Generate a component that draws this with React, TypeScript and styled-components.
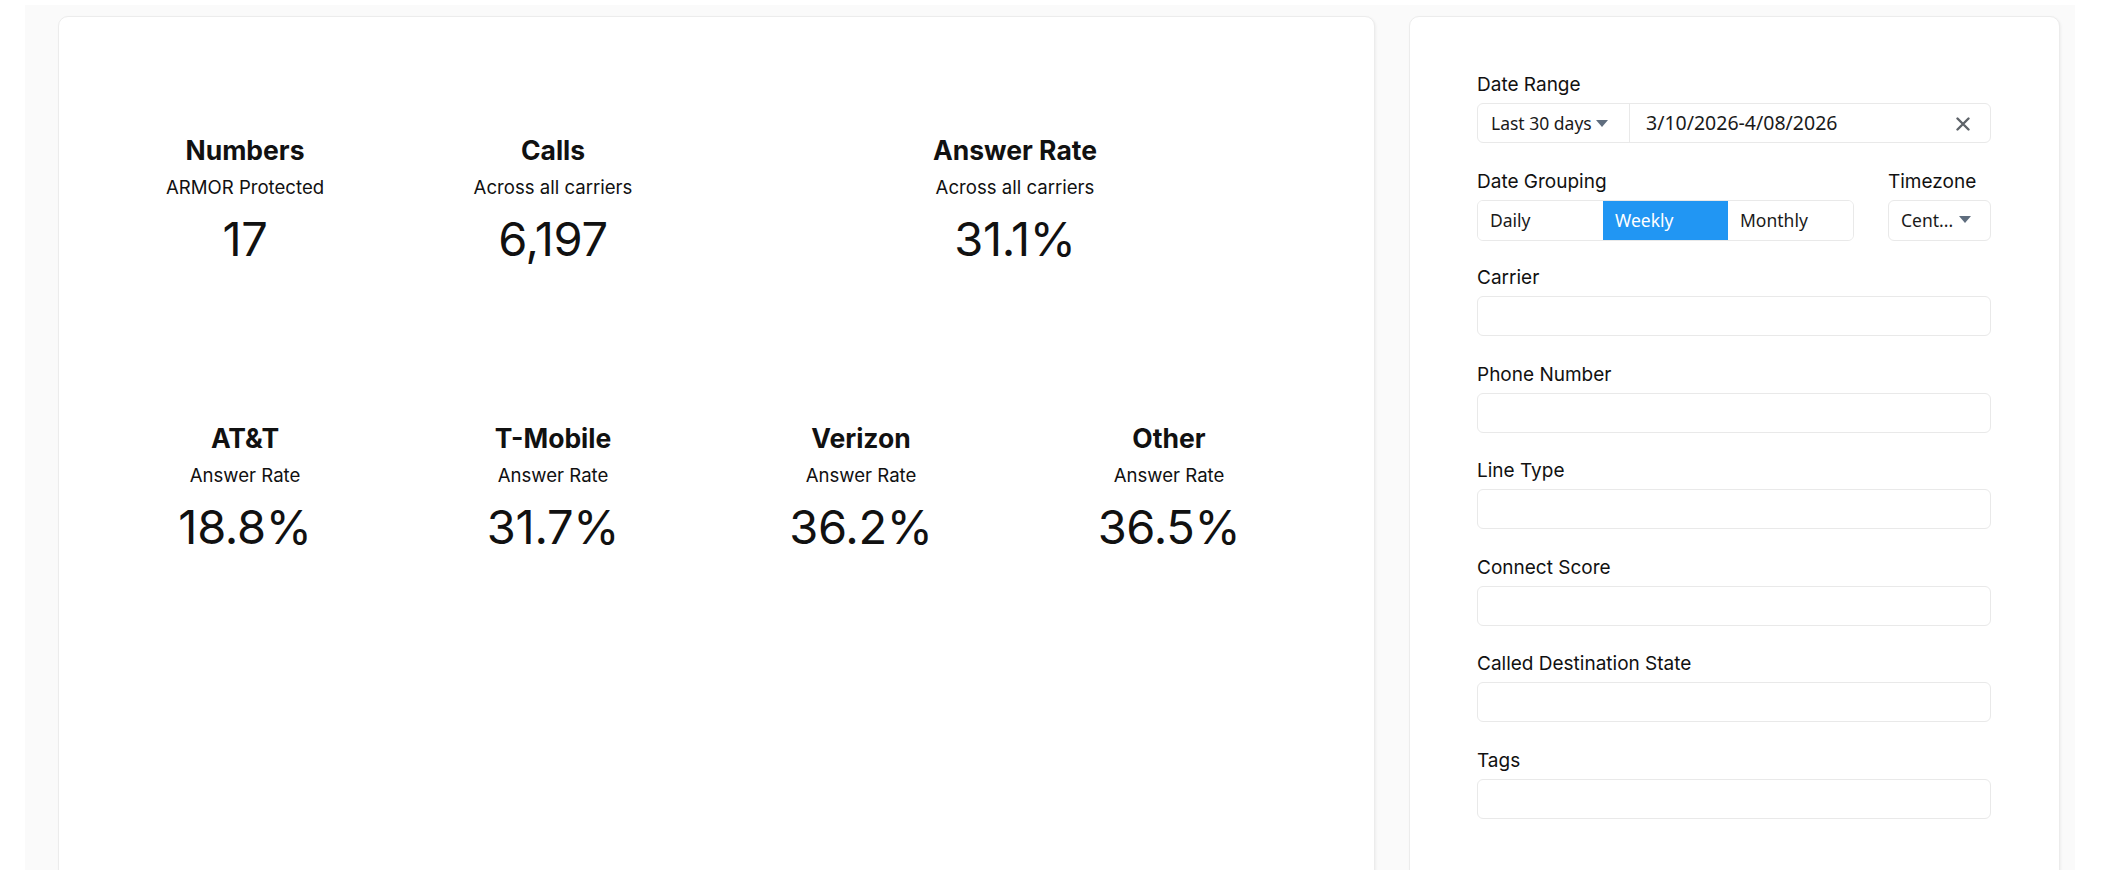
import React from "react";
import styled, { createGlobalStyle } from "styled-components";

const Global = createGlobalStyle`
  html, body {
    margin: 0;
    padding: 0;
    background: #ffffff;
    overflow: hidden;
    font-family: Inter, "Noto Sans", sans-serif;
    color: #111111;
  }
  * { box-sizing: border-box; }
`;

const Page = styled.div`
  padding: 5px 27px 0 25px;
  height: 870px;
`;

const Canvas = styled.div`
  background: #fafafa;
  height: 100%;
  padding: 11px 15px 0 33px;
  display: grid;
  grid-template-columns: 1317px 651px;
  column-gap: 34px;
  align-items: start;
`;

const Card = styled.section<{ $pad: string }>`
  background: #ffffff;
  border: 1px solid #ececec;
  border-radius: 10px;
  box-shadow: 1px 1px 3px rgba(0, 0, 0, 0.05);
  min-height: 900px;
  padding: ${(p) => p.$pad};
`;

const StatGrid = styled.div`
  display: grid;
  grid-template-columns: repeat(4, 1fr);
  row-gap: 156px;
`;

const Stat = styled.div<{ $span?: number }>`
  grid-column: span ${(p) => p.$span ?? 1};
  display: flex;
  flex-direction: column;
  align-items: center;
  text-align: center;
`;

const StatTitle = styled.div`
  font-size: 26.5px;
  font-weight: 700;
  line-height: 30px;
`;

const StatSub = styled.div`
  margin-top: 9.5px;
  font-size: 18.6px;
  line-height: 24px;
  font-weight: 400;
`;

const StatValue = styled.div`
  margin-top: 12.5px;
  font-size: 47px;
  line-height: 56px;
  font-weight: 400;
  letter-spacing: -0.3px;
`;

const Field = styled.div<{ $gap?: number }>`
  display: flex;
  flex-direction: column;
  margin-bottom: ${(p) => p.$gap ?? 27}px;
`;

const Label = styled.div`
  font-size: 19px;
  line-height: 24px;
  margin-bottom: 6px;
  color: #111;
`;

const Box = styled.div`
  height: 40px;
  border: 1px solid #e9e9e9;
  border-radius: 6px;
  background: #fff;
  display: flex;
  align-items: stretch;
  font-family: "Noto Sans", Inter, sans-serif;
  font-size: 17.5px;
  color: #1a1a1a;
  overflow: hidden;
`;

const RangeSelect = styled.div`
  width: 152px;
  border-right: 1px solid #e9e9e9;
  display: flex;
  align-items: center;
  padding-left: 13px;
  gap: 4px;
`;

const RangeText = styled.div`
  flex: 1;
  display: flex;
  align-items: center;
  padding-left: 16px;
  font-size: 19.5px;
  padding-bottom: 1px;
`;

const ClearBtn = styled.div`
  display: flex;
  align-items: center;
  padding-right: 20px;
  padding-top: 2px;
`;

const GroupRow = styled.div`
  display: flex;
  justify-content: space-between;
  margin-bottom: 25px;
`;

const Segments = styled.div`
  display: grid;
  grid-template-columns: repeat(3, 125px);
  height: 41px;
  border: 1px solid #e9e9e9;
  border-radius: 6px;
  overflow: hidden;
  font-family: "Noto Sans", Inter, sans-serif;
  font-size: 17.5px;
`;

const Segment = styled.div<{ $active?: boolean }>`
  display: flex;
  align-items: center;
  padding-left: 12px;
  padding-bottom: 2px;
  background: ${(p) => (p.$active ? "#2196f3" : "#ffffff")};
  color: ${(p) => (p.$active ? "#ffffff" : "#1a1a1a")};
`;

const TzSelect = styled(Box)`
  width: 103px;
  height: 41px;
  align-items: center;
  padding-left: 12px;
  padding-bottom: 2px;
  gap: 6px;
`;

const Caret = () => (
  <svg width="12" height="7" viewBox="0 0 12 7">
    <path d="M0 0 L12 0 L6 7 Z" fill="#5f6d7e" />
  </svg>
);

const Cross = () => (
  <svg width="14" height="14" viewBox="0 0 14 14">
    <path d="M1.5 1.5 L12.5 12.5 M12.5 1.5 L1.5 12.5" stroke="#5e6369" strokeWidth="2.4" strokeLinecap="round" />
  </svg>
);

const plainFields = [
  "Carrier",
  "Phone Number",
  "Line Type",
  "Connect Score",
  "Called Destination State",
  "Tags",
];

const topStats = [
  { title: "Numbers", sub: "ARMOR Protected", value: "17", span: 1 },
  { title: "Calls", sub: "Across all carriers", value: "6,197", span: 1 },
  { title: "Answer Rate", sub: "Across all carriers", value: "31.1%", span: 2 },
];

const carrierStats = [
  { title: "AT&T", value: "18.8%" },
  { title: "T-Mobile", value: "31.7%" },
  { title: "Verizon", value: "36.2%" },
  { title: "Other", value: "36.5%" },
];

export default function App() {
  return (
    <>
      <Global />
      <Page>
        <Canvas>
          <Card $pad="118px 51px 0 32px">
            <StatGrid>
              {topStats.map((s) => (
                <Stat key={s.title} $span={s.span}>
                  <StatTitle>{s.title}</StatTitle>
                  <StatSub>{s.sub}</StatSub>
                  <StatValue>{s.value}</StatValue>
                </Stat>
              ))}
              {carrierStats.map((s) => (
                <Stat key={s.title}>
                  <StatTitle>{s.title}</StatTitle>
                  <StatSub>Answer Rate</StatSub>
                  <StatValue>{s.value}</StatValue>
                </Stat>
              ))}
            </StatGrid>
          </Card>
          <Card $pad="56px 68px 0 67px">
            <Field $gap={27}>
              <Label>Date Range</Label>
              <Box>
                <RangeSelect>
                  Last 30 days <Caret />
                </RangeSelect>
                <RangeText>3/10/2026-4/08/2026</RangeText>
                <ClearBtn>
                  <Cross />
                </ClearBtn>
              </Box>
            </Field>
            <GroupRow>
              <div>
                <Label>Date Grouping</Label>
                <Segments>
                  <Segment>Daily</Segment>
                  <Segment $active>Weekly</Segment>
                  <Segment>Monthly</Segment>
                </Segments>
              </div>
              <div>
                <Label>Timezone</Label>
                <TzSelect>
                  Cent... <Caret />
                </TzSelect>
              </div>
            </GroupRow>
            {plainFields.map((f) => (
              <Field key={f} $gap={26.5}>
                <Label>{f}</Label>
                <Box />
              </Field>
            ))}
          </Card>
        </Canvas>
      </Page>
    </>
  );
}
